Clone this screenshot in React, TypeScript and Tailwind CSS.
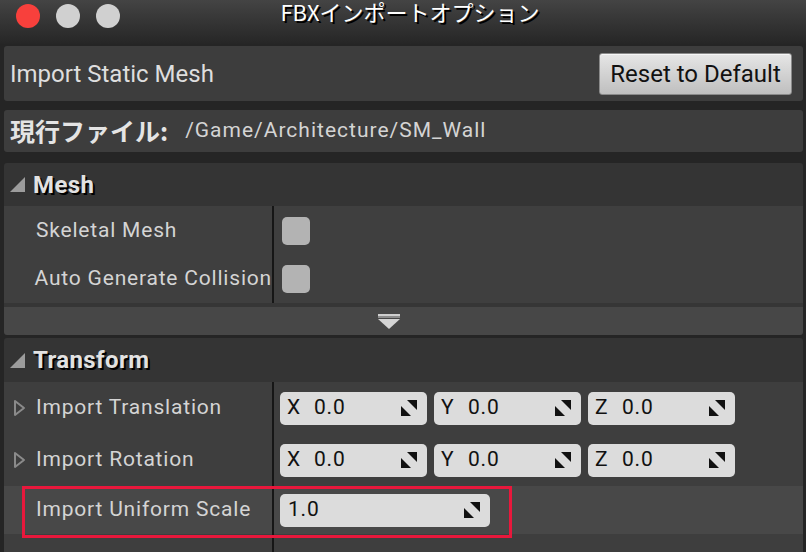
import React from 'react';

const Spinner = () => (
    <svg width="18" height="18" viewBox="0 0 18 18" className="shrink-0">
        <polygon points="7,1 17,1 17,11" fill="#111" />
        <polygon points="1,7 1,17 11,17" fill="#111" />
    </svg>
);

const CategoryArrow = () => (
    <svg width="15" height="15" viewBox="0 0 15 15" className="shrink-0">
        <polygon points="15,0 15,15 0,15" fill="#9c9c9c" />
    </svg>
);

const RowArrow = () => (
    <svg width="13" height="18" viewBox="0 0 13 18" className="shrink-0">
        <polygon points="2,2 11,9 2,16" fill="none" stroke="#8a8a8a" strokeWidth="2" strokeLinejoin="round" />
    </svg>
);

const NumberField = ({ axis, value, width }: { axis?: string; value: string; width: string }) => (
    <div className={`${width} h-[33px] bg-[#dcdcdc] rounded-[5px] flex items-center pl-[7px] pr-[9px] text-[21px] tracking-[0.8px] text-[#111]`}>
        {axis && <span className="w-[27px]">{axis}</span>}
        <span className="flex-1">{value}</span>
        <Spinner />
    </div>
);

const Checkbox = () => <div className="w-[28px] h-[28px] rounded-[5px] bg-[#b3b3b3]" />;

const PropertyRow = ({
    label,
    height,
    bg,
    expandable,
    children,
}: {
    label: string;
    height: string;
    bg: string;
    expandable?: boolean;
    children?: React.ReactNode;
}) => (
    <div className={`grid grid-cols-[270px_1fr] ${height} ${bg}`}>
        <div className="flex items-center border-r-2 border-[#161616]">
            <div className="w-[32px] flex justify-end pr-[10px]">{expandable && <RowArrow />}</div>
            <span className="text-[21px] tracking-[0.8px] text-[#d4d4d4] whitespace-nowrap">{label}</span>
        </div>
        <div className="flex items-center pl-[6px] gap-[7px]">{children}</div>
    </div>
);

const CategoryHeader = ({ title, height }: { title: string; height: string }) => (
    <div className={`flex items-center ${height} bg-[#343434] pl-[6px] gap-[8px]`}>
        <CategoryArrow />
        <span className="text-[24px] font-bold tracking-[0.4px] text-[#e2e2e2] [text-shadow:2px_2px_0_#000]">{title}</span>
    </div>
);

export default function App() {
    return (
        <div className="w-[806px] h-[552px] overflow-hidden bg-[#252525] flex flex-col font-[Roboto,'Noto_Sans_CJK_JP',sans-serif]">
            {/* title bar */}
            <div className="h-[44px] shrink-0 grid grid-cols-[1fr_auto_1fr] items-start bg-linear-to-b from-[#444444] to-[#262626]">
                <div className="flex gap-[16px] pl-[16px] pt-[4px]">
                    <div className="w-[24px] h-[24px] rounded-full bg-[#f8403c]" />
                    <div className="w-[24px] h-[24px] rounded-full bg-[#d0d0d0]" />
                    <div className="w-[24px] h-[24px] rounded-full bg-[#d0d0d0]" />
                </div>
                <div className="pl-[14px] text-[22px] leading-[20px] pt-[1px] text-white font-['Noto_Sans_CJK_JP',sans-serif] [text-shadow:2px_2px_0_#000]">
                    FBXインポートオプション
                </div>
                <div />
            </div>

            <div className="flex flex-col pl-[4px] pr-[3px] mt-[2px]">
                {/* import type */}
                <div className="h-[55px] bg-[#3d3d3d] rounded-[3px] flex items-center justify-between pl-[6px] pr-[11px]">
                    <span className="text-[24px] text-[#dedede]">Import Static Mesh</span>
                    <button className="w-[193px] h-[42px] rounded-[3px] border border-[#8a8a8a] bg-linear-to-b from-[#e6e6e6] to-[#bfbfbf] text-[24px] text-[#111] shadow-[inset_0_1px_0_#f5f5f5]">
                        Reset to Default
                    </button>
                </div>

                {/* current file */}
                <div className="h-[42px] mt-[9px] bg-[#3d3d3d] rounded-[3px] flex items-center pl-[6px]">
                    <span className="text-[25px] font-bold text-[#e4e4e4] font-['Noto_Sans_CJK_JP',sans-serif]">現行ファイル:</span>
                    <span className="ml-[17px] text-[21px] tracking-[1px] text-[#d4d4d4]">/Game/Architecture/SM_Wall</span>
                </div>

                {/* Mesh */}
                <div className="mt-[11px] rounded-[3px] overflow-hidden flex flex-col">
                    <CategoryHeader title="Mesh" height="h-[43px]" />
                    <PropertyRow label="Skeletal Mesh" height="h-[49px]" bg="bg-[#3f3f3f]">
                        <div className="pl-[2px]">
                            <Checkbox />
                        </div>
                    </PropertyRow>
                    <PropertyRow label="Auto Generate Collision" height="h-[48px]" bg="bg-[#3f3f3f]">
                        <div className="pl-[2px]">
                            <Checkbox />
                        </div>
                    </PropertyRow>
                    <div className="h-[4px] bg-[#363636]" />
                    <div className="h-[28px] bg-[#474747] flex items-center pl-[374px]">
                        <svg width="22" height="15" viewBox="0 0 22 15">
                            <rect x="0" y="0" width="22" height="2" fill="#cfcfcf" />
                            <rect x="0" y="2" width="22" height="2" fill="#8c8c8c" />
                            <polygon points="0,5 22,5 11,15" fill="#d4d4d4" />
                        </svg>
                    </div>
                </div>

                {/* Transform */}
                <div className="mt-[3px] rounded-t-[3px] overflow-hidden flex flex-col">
                    <CategoryHeader title="Transform" height="h-[44px]" />
                    <PropertyRow label="Import Translation" height="h-[52px]" bg="bg-[#3e3e3e]" expandable>
                        <NumberField axis="X" value="0.0" width="w-[147px]" />
                        <NumberField axis="Y" value="0.0" width="w-[147px]" />
                        <NumberField axis="Z" value="0.0" width="w-[147px]" />
                    </PropertyRow>
                    <PropertyRow label="Import Rotation" height="h-[52px]" bg="bg-[#3e3e3e]" expandable>
                        <NumberField axis="X" value="0.0" width="w-[147px]" />
                        <NumberField axis="Y" value="0.0" width="w-[147px]" />
                        <NumberField axis="Z" value="0.0" width="w-[147px]" />
                    </PropertyRow>
                    <div className="relative">
                        <PropertyRow label="Import Uniform Scale" height="h-[48px]" bg="bg-[#484848]">
                            <NumberField value="1.0" width="w-[210px] pl-[8px]" />
                        </PropertyRow>
                        <div className="absolute left-[18px] top-0 w-[490px] h-[52px] border-[3px] border-[#e8183c] pointer-events-none" />
                    </div>
                    <PropertyRow label="" height="h-[40px]" bg="bg-[#3e3e3e]" />
                </div>
            </div>
        </div>
    );
}
